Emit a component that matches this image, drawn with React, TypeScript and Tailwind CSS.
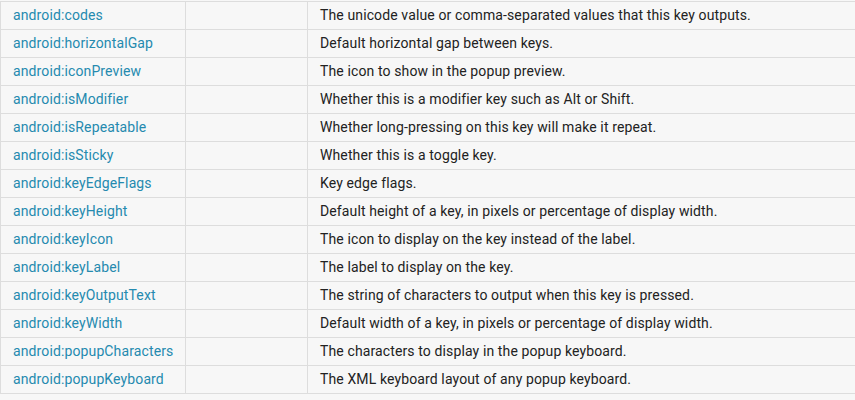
import React from 'react';

const rows: [string, string][] = [
  ['android:codes', 'The unicode value or comma-separated values that this key outputs.'],
  ['android:horizontalGap', 'Default horizontal gap between keys.'],
  ['android:iconPreview', 'The icon to show in the popup preview.'],
  ['android:isModifier', 'Whether this is a modifier key such as Alt or Shift.'],
  ['android:isRepeatable', 'Whether long-pressing on this key will make it repeat.'],
  ['android:isSticky', 'Whether this is a toggle key.'],
  ['android:keyEdgeFlags', 'Key edge flags.'],
  ['android:keyHeight', 'Default height of a key, in pixels or percentage of display width.'],
  ['android:keyIcon', 'The icon to display on the key instead of the label.'],
  ['android:keyLabel', 'The label to display on the key.'],
  ['android:keyOutputText', 'The string of characters to output when this key is pressed.'],
  ['android:keyWidth', 'Default width of a key, in pixels or percentage of display width.'],
  ['android:popupCharacters', 'The characters to display in the popup keyboard.'],
  ['android:popupKeyboard', 'The XML keyboard layout of any popup keyboard.'],
];

const App: React.FC = () => {
  return (
    <div className="w-[855px] h-[400px] overflow-hidden bg-[#f7f7f7] pt-px font-['Roboto',sans-serif] text-[14px] tracking-[0.12px]">
      <table className="w-[880px] border-collapse table-fixed">
        <colgroup>
          <col className="w-[185px]" />
          <col className="w-[122px]" />
          <col />
        </colgroup>
        <tbody>
          {rows.map(([attr, desc]) => (
            <tr key={attr} className="h-[28px]">
              <td className="border border-[#dddddd] px-3 py-0 text-[#258aaf] whitespace-nowrap">{attr}</td>
              <td className="border border-[#dddddd]"></td>
              <td className="border border-[#dddddd] px-3 py-0 text-[#222222] whitespace-nowrap">{desc}</td>
            </tr>
          ))}
        </tbody>
      </table>
    </div>
  );
};

export default App;
